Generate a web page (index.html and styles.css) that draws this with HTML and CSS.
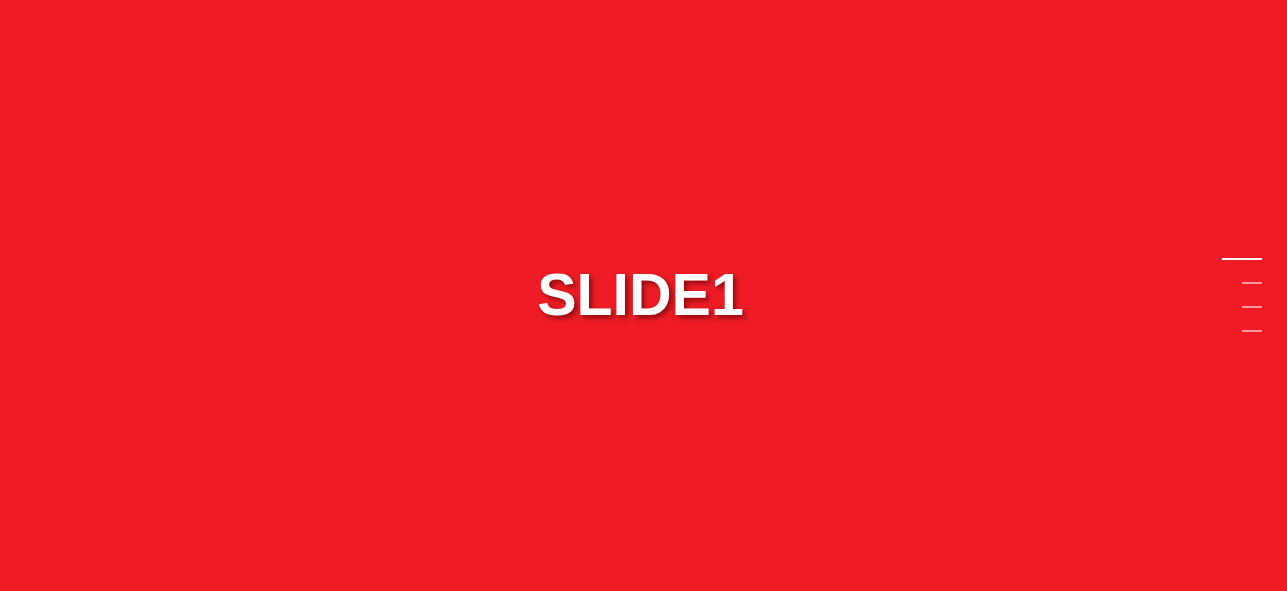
FILE: index.html
```html
<!DOCTYPE html>
<html>
<head>
<meta charset="utf-8">
<link rel="stylesheet" href="styles.css">
</head>
<body>
<main class="slide">
  <h1 class="title">SLIDE1</h1>
  <nav class="dots">
    <span class="dot active"></span>
    <span class="dot"></span>
    <span class="dot"></span>
    <span class="dot"></span>
  </nav>
</main>
</body>
</html>
```
FILE: styles.css
```css
html, body {
  margin: 0;
  padding: 0;
  height: 100%;
  overflow: hidden;
}
.slide {
  position: relative;
  width: 100%;
  height: 100%;
  background: #ef1c25;
  display: flex;
  align-items: center;
  justify-content: center;
}
.title {
  margin: 0 6px 0 0;
  color: #fff;
  font-family: "Liberation Sans", Arial, sans-serif;
  font-weight: bold;
  font-size: 59px;
  line-height: 1;
  text-shadow: 3px 3px 5px rgba(80, 0, 0, 0.6);
}
.dots {
  position: absolute;
  right: 25px;
  top: 50%;
  transform: translateY(-38px);
  display: flex;
  flex-direction: column;
  align-items: flex-end;
  gap: 22px;
}
.dot {
  display: block;
  width: 20px;
  height: 2px;
  background: rgba(255, 255, 255, 0.55);
}
.dot.active {
  width: 40px;
  background: #fff;
}
```
